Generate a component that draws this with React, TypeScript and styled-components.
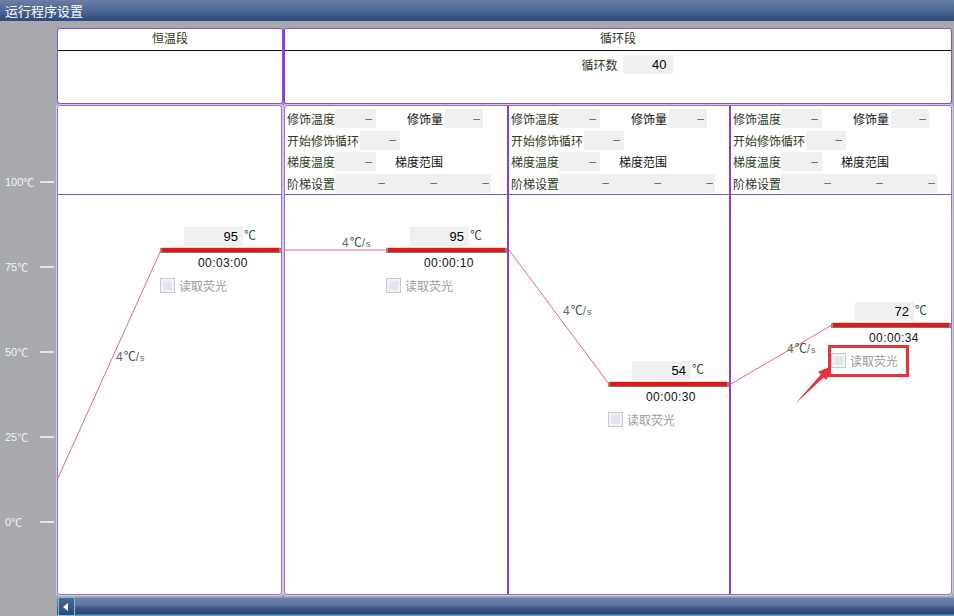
import React from 'react'
import styled, { createGlobalStyle } from 'styled-components'

const GlobalStyle = createGlobalStyle`
  html, body {
    margin: 0;
    padding: 0;
    background: #a7a9ac;
  }
  body {
    font-family: "Liberation Sans", "Noto Sans CJK SC", sans-serif;
  }
  * {
    box-sizing: border-box;
  }
`

const LABEL = '#2b3a1b'
const PURPLE = '#8a3fd0'
const CJK = '"Noto Sans CJK SC", sans-serif'

const Window = styled.div`
  width: 954px;
  height: 616px;
  display: flex;
  flex-direction: column;
  background: #a7a9ac;
  overflow: hidden;
`

const TitleBar = styled.div`
  height: 21px;
  flex-shrink: 0;
  display: flex;
  align-items: center;
  padding-left: 5px;
  color: #fff;
  font-size: 13px;
  background: linear-gradient(#6c80a6, #4d6692 50%, #2e4a7b);
`

const Body = styled.div`
  flex: 1;
  display: flex;
`

const Axis = styled.div`
  width: 57px;
  flex-shrink: 0;
  display: flex;
  flex-direction: column;
  padding-top: 118.5px;
`

const AxisRow = styled.div`
  height: 85px;
  display: flex;
  align-items: center;
  padding-left: 5px;
  color: #f4f4f4;
  font-size: 11px;
`

const AxisText = styled.span`
  width: 35px;
  display: flex;
  align-items: center;
`

const Celsius = styled.span`
  font-family: ${CJK};
`

const AxisTick = styled.span`
  width: 14px;
  height: 2px;
  background: #e4e4e4;
`

const Main = styled.div`
  flex: 1;
  display: flex;
  flex-direction: column;
  padding-top: 7px;
`

const HeaderRow = styled.div`
  display: flex;
  height: 76px;
`

const HeaderPanel = styled.div<{ $width: number; $thick?: boolean }>`
  width: ${({ $width }) => $width}px;
  background: #fff;
  border: 1px solid #8a4fd0;
  border-left-width: ${({ $thick }) => ($thick ? 2 : 1)}px;
  border-left-color: ${({ $thick }) => ($thick ? PURPLE : '#8a4fd0')};
  border-radius: 3px;
  display: flex;
  flex-direction: column;
`

const HeaderTitle = styled.div`
  height: 22px;
  line-height: 21px;
  border-bottom: 1px solid #111;
  text-align: center;
  font-size: 12px;
  color: ${LABEL};
`

const CycleCount = styled.div`
  display: flex;
  justify-content: center;
  align-items: center;
  margin-top: 4px;
  padding-left: 18px;
  gap: 5px;
  font-size: 12px;
  color: ${LABEL};
`

const CountBox = styled.span`
  width: 50px;
  height: 19px;
  background: #f0f0f0;
  color: #000;
  font-size: 13px;
  text-align: right;
  padding-right: 6px;
  line-height: 19px;
`

const StepsRow = styled.div`
  display: flex;
  gap: 2px;
  margin-top: 1px;
  height: 490px;
`

const StepBox = styled.div<{ $width: number }>`
  width: ${({ $width }) => $width}px;
  background: #fff;
  border: 1px solid #9270cc;
  border-radius: 3px;
  box-shadow: 0 0 0 1px #d6c8ec;
  display: flex;
`

const StepColumn = styled.div<{ $width: number; $divider?: boolean }>`
  width: ${({ $width }) => $width}px;
  display: flex;
  flex-direction: column;
  border-left: ${({ $divider }) => ($divider ? `2px solid ${PURPLE}` : 'none')};
`

const Params = styled.div`
  height: 89px;
  flex-shrink: 0;
  border-bottom: 1px solid #7f5ac8;
  padding-top: 2px;
  display: flex;
  flex-direction: column;
`

const ParamRow = styled.div`
  height: 21.5px;
  display: flex;
  align-items: center;
  font-size: 12px;
`

const ParamLabel = styled.span<{ $w: number }>`
  width: ${({ $w }) => $w}px;
  padding-left: 2px;
  color: ${LABEL};
  white-space: nowrap;
`

const ValueCell = styled.span<{ $w: number; $pad?: number; $white?: boolean }>`
  width: ${({ $w }) => $w}px;
  height: 19px;
  display: flex;
  align-items: center;
  justify-content: flex-end;
  padding-right: ${({ $pad }) => $pad ?? 4}px;
  background: ${({ $white }) => ($white ? '#fff' : '#f0f0f0')};
  color: ${({ $white }) => ($white ? '#111' : '#666')};
`

const Chart = styled.div`
  flex: 1;
  position: relative;
`

const ChartSvg = styled.svg`
  position: absolute;
  left: 0;
  top: 0;
  width: 100%;
  height: 100%;
  overflow: visible;
`

const Marker = styled.div`
  position: absolute;
  width: 124px;
  display: flex;
  flex-direction: column;
`

const TempRow = styled.div`
  display: flex;
  height: 19px;
  margin-left: 23px;
`

const TempBox = styled.span`
  width: 59px;
  height: 19px;
  background: #f0f0f0;
  font-size: 13px;
  line-height: 19px;
  text-align: right;
  padding-right: 5px;
  color: #000;
`

const Unit = styled.span`
  font-family: ${CJK};
  font-size: 12px;
  line-height: 16px;
  margin-left: 1px;
  color: #2f4f2f;
`

const TimeText = styled.div`
  margin-top: 10px;
  height: 15px;
  line-height: 15px;
  text-align: center;
  font-size: 12px;
  letter-spacing: 0.4px;
  color: #111;
`

const CheckRow = styled.div`
  margin-top: 6px;
  margin-left: -1px;
  display: flex;
  align-items: center;
  gap: 4px;
  font-size: 12px;
  color: #9a9a9a;
`

const CheckBox = styled.span`
  width: 15px;
  height: 15px;
  border: 1px solid #c3cad3;
  background: linear-gradient(135deg, #e9edf2, #dbe2ea);
  box-shadow: inset 0 0 0 2px #f1f4f7;
`

const RateLabel = styled.div`
  position: absolute;
  font-size: 12px;
  color: #666;
  white-space: nowrap;
  display: flex;
  align-items: baseline;
`

const RateUnit = styled.span`
  font-family: ${CJK};
  color: #2f4f2f;
  margin-left: 1px;
`

const SmallS = styled.span`
  font-size: 9px;
  margin-left: 1px;
`

const Highlight = styled.div`
  position: absolute;
  left: 97px;
  top: 150px;
  width: 81px;
  height: 32px;
  border: 3px solid #e5343c;
`

const ScrollBar = styled.div`
  height: 19px;
  margin-top: 2px;
  display: flex;
  padding-left: 1px;
  background: linear-gradient(#8fc4e0 0, #6b80a8 1px, #6479a3 40%, #3a5585 60%, #2d4878 88%, #6fb4d8 100%);
`

const ScrollButton = styled.div`
  width: 17px;
  border: 1px solid #6fc3e6;
  background: linear-gradient(#4d6896, #2b4574);
  display: flex;
  align-items: center;
  justify-content: center;
  &::before {
    content: '';
    border-top: 4px solid transparent;
    border-bottom: 4px solid transparent;
    border-right: 5px solid #fff;
    margin-right: 2px;
  }
`

type Step = {
  key: string
  width: number
  divider?: boolean
  params: boolean
  prevY: number
  barX: number
  barY: number
  temp: string
  time: string
  rate: { x: number; y: number }
  highlight?: boolean
}

const steps: Step[] = [
  { key: 'hold', width: 223, params: false, prevY: 283, barX: 103, barY: 53, temp: '95', time: '00:03:00', rate: { x: 58, y: 152 } },
  { key: 'c1', width: 222, params: true, prevY: 55, barX: 102, barY: 53, temp: '95', time: '00:00:10', rate: { x: 57, y: 38 } },
  { key: 'c2', width: 222, divider: true, params: true, prevY: 55, barX: 100, barY: 187, temp: '54', time: '00:00:30', rate: { x: 54, y: 106 } },
  { key: 'c3', width: 222, divider: true, params: true, prevY: 189, barX: 101, barY: 128, temp: '72', time: '00:00:34', rate: { x: 56, y: 144 }, highlight: true },
]

const axisLabels = ['100', '75', '50', '25', '0']

const Dash = () => <>–</>

const ParamTable = () => (
  <Params>
    <ParamRow>
      <ParamLabel $w={50}>修饰温度</ParamLabel>
      <ValueCell $w={41}><Dash /></ValueCell>
      <ValueCell $w={69} $pad={2} $white>修饰量</ValueCell>
      <ValueCell $w={38} $pad={3}><Dash /></ValueCell>
    </ParamRow>
    <ParamRow>
      <ParamLabel $w={75}>开始修饰循环</ParamLabel>
      <ValueCell $w={40}><Dash /></ValueCell>
    </ParamRow>
    <ParamRow>
      <ParamLabel $w={50}>梯度温度</ParamLabel>
      <ValueCell $w={41}><Dash /></ValueCell>
      <ValueCell $w={69} $pad={2} $white>梯度范围</ValueCell>
    </ParamRow>
    <ParamRow>
      <ParamLabel $w={50}>阶梯设置</ParamLabel>
      <ValueCell $w={52} $pad={2}><Dash /></ValueCell>
      <ValueCell $w={52} $pad={2}><Dash /></ValueCell>
      <ValueCell $w={52} $pad={2}><Dash /></ValueCell>
    </ParamRow>
  </Params>
)

const StepView = ({ step }: { step: Step }) => {
  const inner = step.width - (step.divider ? 2 : 0)
  const barEnd = inner - 1
  return (
    <StepColumn $width={step.width} $divider={step.divider}>
      {step.params ? <ParamTable /> : <Params />}
      <Chart>
        <ChartSvg>
          <line x1={0} y1={step.prevY} x2={step.barX} y2={step.barY + 2} stroke="#e66a78" strokeWidth={1} />
          <rect x={step.barX} y={step.barY - 1} width={barEnd - step.barX} height={1} fill="#f5d2d2" />
          <rect x={step.barX} y={step.barY} width={barEnd - step.barX} height={4} fill="#e01818" />
          <rect x={step.barX} y={step.barY + 4} width={barEnd - step.barX} height={1} fill="#7a7a7a" />
          <rect x={step.barX - 1} y={step.barY} width={2} height={5} fill="#9a8a8a" />
          <rect x={barEnd - 1} y={step.barY} width={2} height={5} fill="#8a8a8a" />
          {step.highlight && (
            <polygon
              points="64,209 92.6,182.4 95.5,185.2 101,171 86.9,176.8 89.8,179.6"
              fill="#e8343c"
            />
          )}
        </ChartSvg>
        <RateLabel style={{ left: step.rate.x, top: step.rate.y }}>
          4<RateUnit>℃</RateUnit>/<SmallS>s</SmallS>
        </RateLabel>
        <Marker style={{ left: step.barX, top: step.barY - 21 }}>
          <TempRow>
            <TempBox>{step.temp}</TempBox>
            <Unit>℃</Unit>
          </TempRow>
          <TimeText>{step.time}</TimeText>
          <CheckRow>
            <CheckBox />
            读取荧光
          </CheckRow>
        </Marker>
        {step.highlight && <Highlight />}
      </Chart>
    </StepColumn>
  )
}

const App = () => {
  const [hold, ...cycle] = steps
  return (
    <>
      <GlobalStyle />
      <Window>
        <TitleBar>运行程序设置</TitleBar>
        <Body>
          <Axis>
            {axisLabels.map((label) => (
              <AxisRow key={label}>
                <AxisText>
                  {label}
                  <Celsius>℃</Celsius>
                </AxisText>
                <AxisTick />
              </AxisRow>
            ))}
          </Axis>
          <Main>
            <HeaderRow>
              <HeaderPanel $width={226}>
                <HeaderTitle>恒温段</HeaderTitle>
              </HeaderPanel>
              <HeaderPanel $width={669} $thick>
                <HeaderTitle>循环段</HeaderTitle>
                <CycleCount>
                  循环数
                  <CountBox>40</CountBox>
                </CycleCount>
              </HeaderPanel>
            </HeaderRow>
            <StepsRow>
              <StepBox $width={225}>
                <StepView step={hold} />
              </StepBox>
              <StepBox $width={668}>
                {cycle.map((step) => (
                  <StepView key={step.key} step={step} />
                ))}
              </StepBox>
            </StepsRow>
            <ScrollBar>
              <ScrollButton />
            </ScrollBar>
          </Main>
        </Body>
      </Window>
    </>
  )
}

export default App
